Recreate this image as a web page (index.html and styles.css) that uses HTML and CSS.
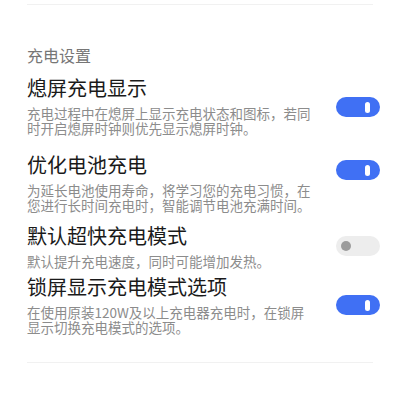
FILE: index.html
```html
<!DOCTYPE html>
<html lang="zh-CN">
<head>
    <meta charset="UTF-8" />
    <meta name="viewport" content="width=device-width, initial-scale=1.0" />
    <title>充电设置</title>
    <link rel="stylesheet" href="styles.css">
</head>
<body>
    <div class="page">
        <div class="divider"></div>

        <h2 class="group-title">充电设置</h2>

        <div class="item first">
            <div class="text">
                <div class="title">熄屏充电显示</div>
                <div class="desc">充电过程中在熄屏上显示充电状态和图标，若同时开启熄屏时钟则优先显示熄屏时钟。</div>
            </div>
            <div class="switch on sw-1"><span class="knob"></span></div>
        </div>

        <div class="item">
            <div class="text">
                <div class="title">优化电池充电</div>
                <div class="desc">为延长电池使用寿命，将学习您的充电习惯，在您进行长时间充电时，智能调节电池充满时间。</div>
            </div>
            <div class="switch on sw-2"><span class="knob"></span></div>
        </div>

        <div class="item short">
            <div class="text">
                <div class="title">默认超快充电模式</div>
                <div class="desc">默认提升充电速度，同时可能增加发热。</div>
            </div>
            <div class="switch off sw-3"><span class="knob"></span></div>
        </div>

        <div class="item last">
            <div class="text">
                <div class="title">锁屏显示充电模式选项</div>
                <div class="desc">在使用原装120W及以上充电器充电时，在锁屏显示切换充电模式的选项。</div>
            </div>
            <div class="switch on sw-4"><span class="knob"></span></div>
        </div>

        <div class="divider"></div>
    </div>
</body>
</html>
```

FILE: styles.css
```css
body {
    margin: 0;
    background: #fff;
    font-family: "Noto Sans CJK SC", "Noto Sans", sans-serif;
}

.page {
    padding: 4px 20px 0 27px;
}

.divider {
    height: 1px;
    background: #f1f1f1;
    margin-right: 7px;
}

.group-title {
    margin: 40px 0 10px;
    font-size: 16px;
    line-height: 20px;
    font-weight: normal;
    color: #767676;
}

.item {
    display: flex;
    align-items: flex-start;
    padding-bottom: 10px;
}

.item.first {
    padding-bottom: 16px;
}

.item.short {
    padding-bottom: 5px;
}

.item.last {
    padding-bottom: 27px;
}

.text {
    width: 290px;
}

.title {
    font-size: 20px;
    line-height: 26px;
    color: #1a1a1a;
}

.desc {
    margin-top: 5px;
    font-size: 13.5px;
    line-height: 15px;
    color: #8c8c8c;
}

/* switches */
.switch {
    margin-left: auto;
    width: 44px;
    height: 20px;
    border-radius: 10px;
    display: flex;
    align-items: center;
}

.switch.on {
    background: #4070f4;
    justify-content: flex-end;
}

.switch.on .knob {
    width: 5px;
    height: 11px;
    border-radius: 3px;
    background: #fff;
    margin-right: 10px;
}

.switch.off {
    background: #ededed;
}

.switch.off .knob {
    width: 10px;
    height: 10px;
    border-radius: 50%;
    background: #9c9c9c;
    margin-left: 5px;
}

.sw-1 { margin-top: 22px; }
.sw-2 { margin-top: 8px; }
.sw-3 { margin-top: 13px; }
.sw-4 { margin-top: 21px; }
```
